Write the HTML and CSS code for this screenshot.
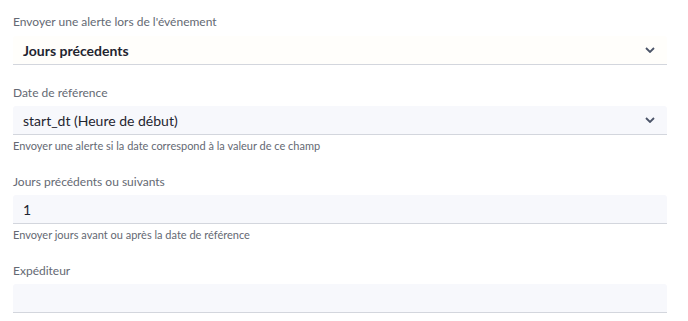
FILE: index.html
```html
<!doctype html>
<html lang="fr">
  <head>
    <meta charset="utf-8"/>
    <title>Alerte</title>
    <link rel="stylesheet" href="styles.css">
  </head>
  <body>
    <div id="wrapper">
      <!-- alert trigger -->
      <div class="field first">
        <div class="field_label">Envoyer une alerte lors de l'événement</div>
        <div class="field_input cream select">
          <span class="value bold">Jours précedents</span>
          <svg class="chevron" width="10" height="6" viewBox="0 0 10 6"><path d="M1 1l4 4 4-4" fill="none" stroke="#4b5468" stroke-width="1.8"/></svg>
        </div>
      </div>

      <div class="field">
        <div class="field_label">Date de référence</div>
        <div class="field_input select">
          <span class="value">start_dt (Heure de début)</span>
          <svg class="chevron" width="10" height="6" viewBox="0 0 10 6"><path d="M1 1l4 4 4-4" fill="none" stroke="#4b5468" stroke-width="1.8"/></svg>
        </div>
        <div class="field_help">Envoyer une alerte si la date correspond à la valeur de ce champ</div>
      </div>

      <div class="field">
        <div class="field_label">Jours précédents ou suivants</div>
        <div class="field_input">
          <span class="value">1</span>
        </div>
        <div class="field_help">Envoyer jours avant ou après la date de référence</div>
      </div>

      <div class="field">
        <div class="field_label">Expéditeur</div>
        <div class="field_input">
          <span class="value"></span>
        </div>
      </div>
    </div>
  </body>
</html>
```

FILE: styles.css
```css
/* page */
body{
  margin: 0;
  font-family: Lato, "Open Sans", sans-serif;
  background: #fff;
}
#wrapper{
  padding: 13px 21px 0 13px;
}
/* one form row */
.field{
  margin-bottom: 20px;
}
.field.first{
  margin-bottom: 19px;
}
.field_label{
  font-size: 12px;
  line-height: 18px;
  color: #646973;
  margin-bottom: 4px;
}
.field.first .field_label{
  margin-bottom: 5px;
}
.field_input{
  display: flex;
  align-items: center;
  justify-content: space-between;
  height: 28px;
  padding: 0 12px 0 10px;
  background: #f7f8fc;
  border-bottom: 1px solid #d3d6dd;
  border-radius: 3px 3px 0 0;
}
.field_input.cream{
  background: #fffefb;
}
.value{
  font-size: 14px;
  color: #1f2530;
}
.bold{
  font-weight: 700;
}
.chevron{
  display: block;
}
.field_help{
  margin-top: 3px;
  font-size: 11px;
  line-height: 15px;
  color: #646973;
}
```
